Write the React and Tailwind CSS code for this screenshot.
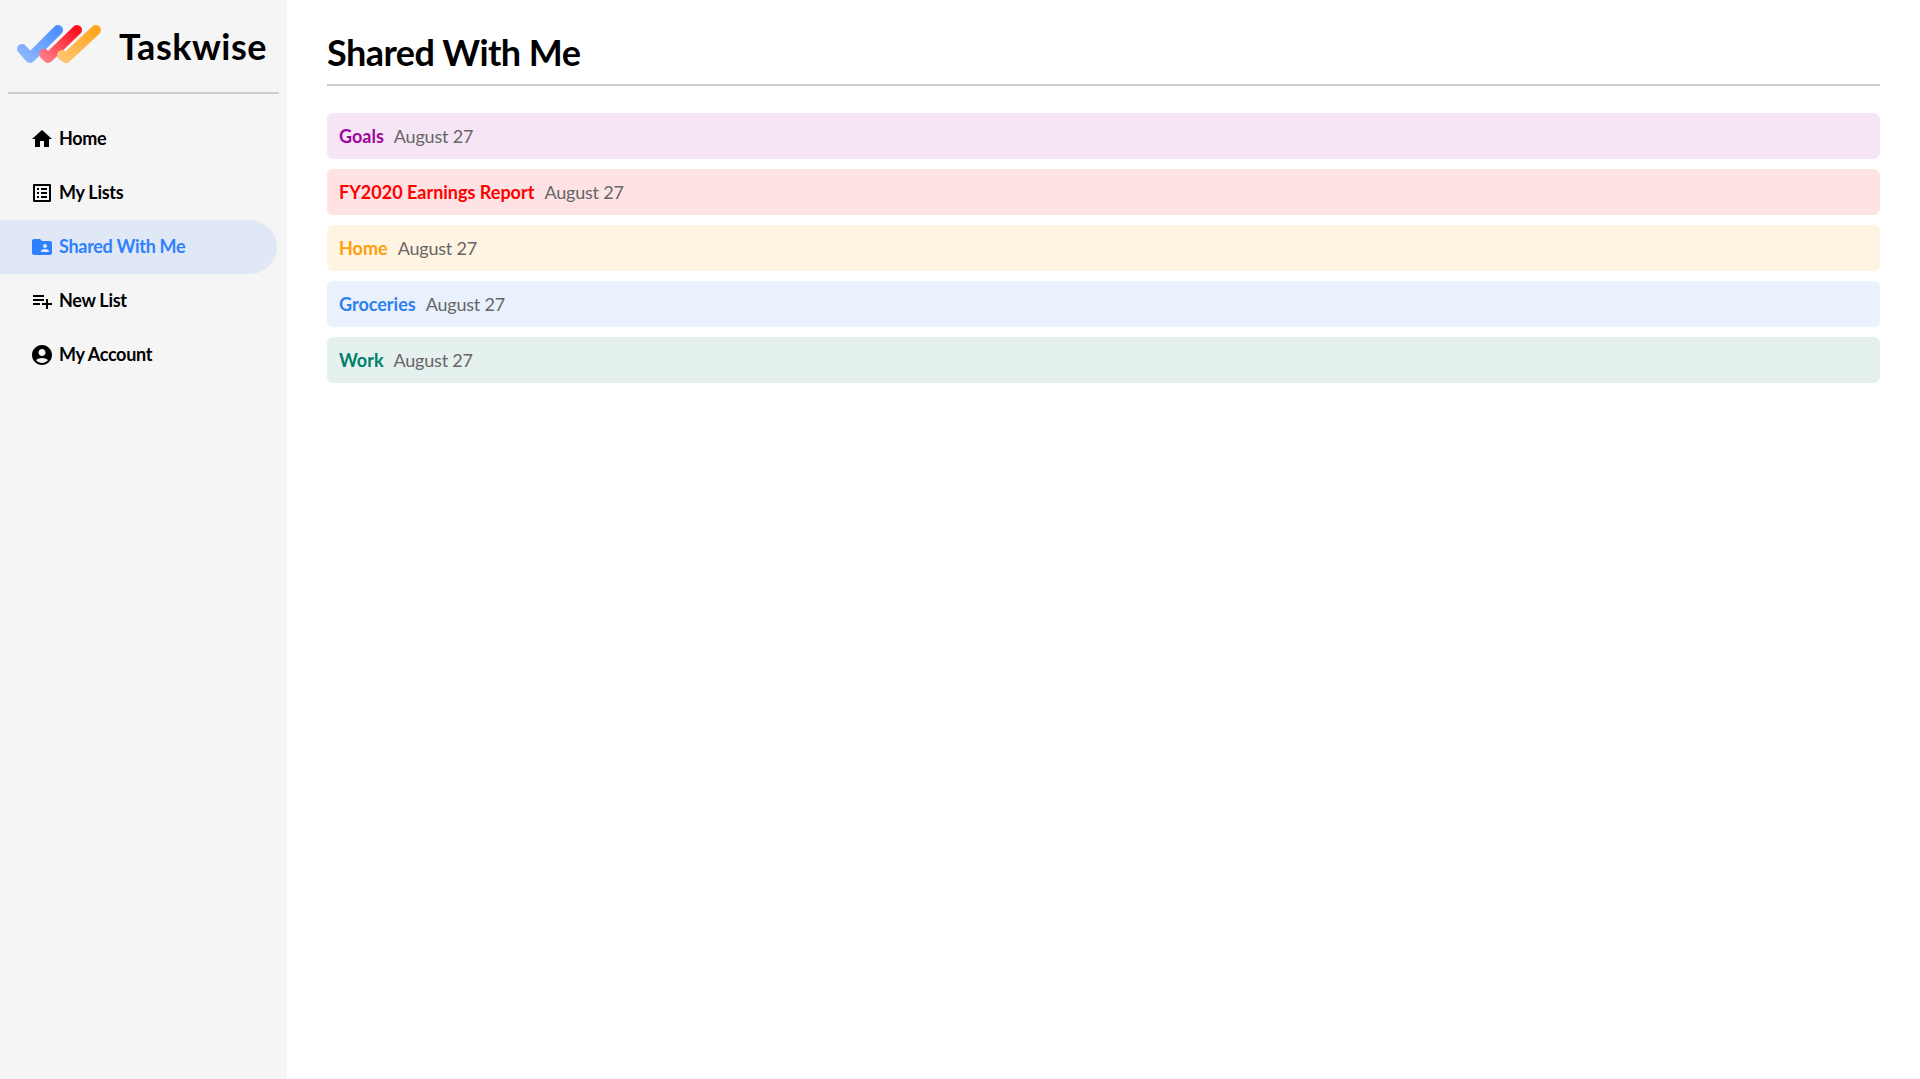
import React from 'react';
import { MdHome, MdOutlineListAlt, MdFolderShared, MdPlaylistAdd, MdAccountCircle } from 'react-icons/md';

const navItems = [
  { label: 'Home', icon: MdHome },
  { label: 'My Lists', icon: MdOutlineListAlt },
  { label: 'Shared With Me', icon: MdFolderShared, active: true },
  { label: 'New List', icon: MdPlaylistAdd },
  { label: 'My Account', icon: MdAccountCircle },
];

const lists = [
  { name: 'Goals', row: 'bg-[#f5e5f5]', text: 'text-[#a0089b]' },
  { name: 'FY2020 Earnings Report', row: 'bg-[#ffe2e3]', text: 'text-[#ff0000]' },
  { name: 'Home', row: 'bg-[#fff4e2]', text: 'text-[#ff9f0a]' },
  { name: 'Groceries', row: 'bg-[#e9f1fd]', text: 'text-[#2e7ff0]' },
  { name: 'Work', row: 'bg-[#e5f1ee]', text: 'text-[#00806a]' },
];

const Logo = () => (
  <svg width="88" height="46" viewBox="0 0 88 46" fill="none" strokeWidth="10" strokeLinecap="round" strokeLinejoin="round">
    <defs>
      <linearGradient id="blue" x1="0" y1="1" x2="1" y2="0">
        <stop offset="0" stopColor="#8db8ff" />
        <stop offset="1" stopColor="#4d90ff" />
      </linearGradient>
      <linearGradient id="red" x1="0" y1="1" x2="1" y2="0">
        <stop offset="0" stopColor="#ff7a88" />
        <stop offset="1" stopColor="#ff0f1f" />
      </linearGradient>
      <linearGradient id="orange" x1="0" y1="1" x2="1" y2="0">
        <stop offset="0" stopColor="#ffc46e" />
        <stop offset="1" stopColor="#ffa51f" />
      </linearGradient>
    </defs>
    <path d="M6 26 L14 35 L42 7" stroke="url(#blue)" />
    <path d="M28 31 L32 35 L61 7" stroke="url(#red)" />
    <path d="M46 32 L50 35 L80 7" stroke="url(#orange)" />
  </svg>
);

const App = () => {
  return (
    <div className="flex min-h-[1079px] bg-white font-['Lato','Noto_Sans',sans-serif]">
      <aside className="w-[287px] shrink-0 bg-[#f5f5f5]">
        <div className="mx-2 h-[94px] border-b-2 border-[#cccccc] flex items-center pl-[8px]">
          <Logo />
          <span className="ml-[15px] text-[36px] font-bold tracking-[0.5px] text-black leading-none">Taskwise</span>
        </div>
        <nav className="mt-[18px] mr-[10px]">
          {navItems.map((item) => {
            const Icon = item.icon;
            return (
              <div
                key={item.label}
                className={`h-[54px] pb-[1px] flex items-center pl-[30px] gap-[5px] text-[18px] font-bold ${
                  item.active ? 'bg-[#e0e8f6] text-[#2f80ff] rounded-r-[27px]' : 'text-black'
                }`}
              >
                <Icon size={24} />
                <span className="tracking-[-0.3px]">{item.label}</span>
              </div>
            );
          })}
        </nav>
      </aside>

      <main className="flex-1 pl-[40px] pr-[40px]">
        <h1 className="h-[86px] pt-[28px] border-b-2 border-[#cccccc] text-[36px] leading-[48px] font-bold tracking-[-0.55px] text-black">
          Shared With Me
        </h1>
        <div className="mt-[27px] flex flex-col gap-[10px]">
          {lists.map((list) => (
            <div key={list.name} className={`h-[46px] rounded-[6px] flex items-center px-[12px] gap-[10px] text-[18px] ${list.row}`}>
              <span className={`font-bold ${list.text}`}>{list.name}</span>
              <span className="text-[#666666] tracking-[-0.2px]">August 27</span>
            </div>
          ))}
        </div>
      </main>
    </div>
  );
};

export default App;
